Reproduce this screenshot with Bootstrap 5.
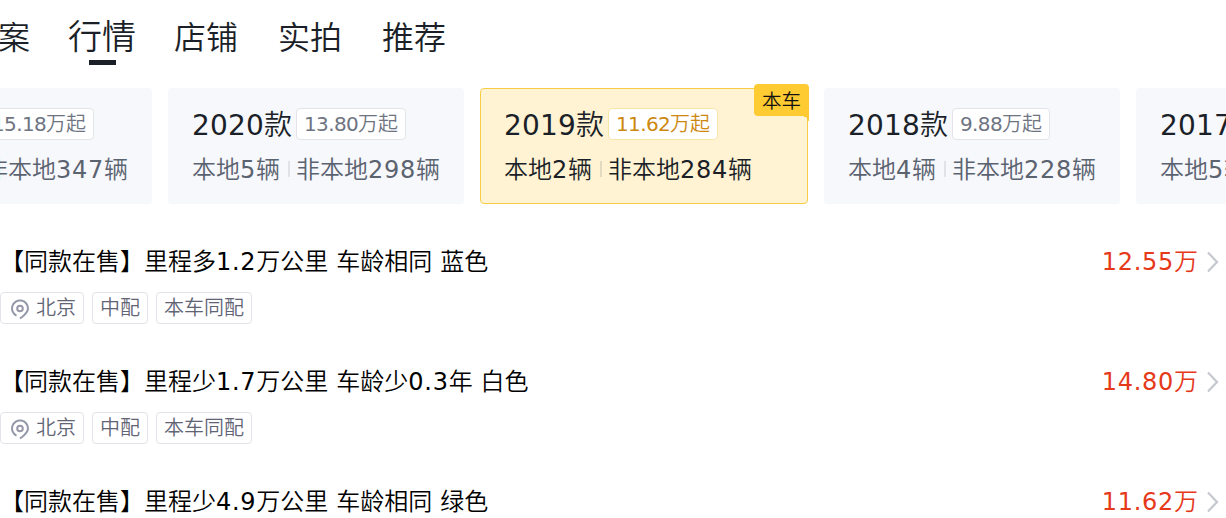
<!doctype html>
<html lang="zh-CN">

<head>
    <meta charset="UTF-8" />
    <meta name="viewport" content="width=device-width, initial-scale=1" />
    <title>行情</title>
    <link href="https://cdn.jsdelivr.net/npm/bootstrap@5.3.3/dist/css/bootstrap.min.css" rel="stylesheet">
    <style>
        body {
            height: 518px;
            font-family: "Noto Sans CJK SC", sans-serif;
            font-weight: 350;
            color: #1b1f28;
            white-space: nowrap;
        }

        /* digits */
        b {
            font-family: "DejaVu Sans", sans-serif;
            font-weight: 400;
            letter-spacing: .73px;
        }

        .tabs {
            height: 88px;
            padding-top: 12px;
            margin-left: -34px;
            gap: 40px;
            font-size: 32px;
            line-height: 46px;
        }

        .tabs .nav-item {
            width: 64px;
        }

        .tab-active {
            font-size: 34px;
            margin: 0 -2px;
        }

        .tab-line {
            width: 27px;
            height: 5px;
            margin: 2px auto 0;
            background: #1b1f28;
        }

        .years {
            margin-left: -144px;
            gap: 16px;
        }

        .year {
            width: 296px;
            height: 116px;
            padding: 16px 24px 0;
            border-radius: 4px;
            background: #f6f8fc;
        }

        .year-name {
            height: 40px;
            font-size: 28px;
            gap: 4px;
        }

        .year-name b {
            letter-spacing: .19px;
        }

        .price-tag,
        .info-tag {
            height: 32px;
            padding: 0 7px;
            border: 1px solid #e2e4ea;
            border-radius: 4px;
            background: #fff;
            color: #6e7482;
            font-size: 20px;
            line-height: 27px;
        }

        .year-name .price-tag b {
            letter-spacing: -.65px;
        }

        .year-count {
            height: 50px;
            font-size: 24px;
            color: #5c6370;
        }

        .year-count i {
            width: 2px;
            height: 16px;
            margin: 0 6px 0 8px;
            background: #dfe2e8;
        }

        .year-now {
            width: 328px;
            padding: 15px 23px 0;
            border: 1px solid #f5ce45;
            background: #fff3d3;
        }

        .year-now .year-count {
            color: #1b1f28;
        }

        .year-now .price-tag {
            color: #cc8810;
            border-color: #f9e5a8;
        }

        .year-now i {
            background: #e3dac2;
        }

        .now-flag {
            top: -5px;
            right: -2px;
            width: 55px;
            height: 32px;
            border-radius: 4px 4px 0 4px;
            background: #ffcb32;
            color: #111;
            font-size: 19.5px;
            line-height: 32px;
        }

        /* small fold that runs from the flag into the border */
        .now-flag::after {
            content: "";
            position: absolute;
            right: 0;
            top: 32px;
            width: 5px;
            height: 5px;
            background: radial-gradient(circle at 0 100%, transparent 4px, #ffcb32 4.5px);
        }

        .offer {
            height: 120px;
            padding: 3px 7px 0 0;
        }

        .offer-title {
            height: 44px;
            font-size: 24px;
            color: #000;
        }

        .offer-title div {
            word-spacing: 2.6px;
        }

        .offer-price {
            color: #e5391a;
            gap: 8px;
        }

        .offer-tags {
            margin-top: 9px;
        }

        .info-tag {
            color: #5f6575;
        }

        .info-tag svg {
            margin: 2px 4px 0 0;
        }
    </style>
</head>

<body class="overflow-hidden bg-white">
    <ul class="nav tabs flex-nowrap mb-0">
        <li class="nav-item">方案</li>
        <li class="nav-item">
            <div class="tab-active">行情</div>
            <div class="tab-line"></div>
        </li>
        <li class="nav-item">店铺</li>
        <li class="nav-item">实拍</li>
        <li class="nav-item">推荐</li>
    </ul>

    <div class="d-flex years">
        <div class="year flex-shrink-0">
            <div class="year-name d-flex align-items-center"><span><b>2021</b>款</span><span class="price-tag"><b>15.18</b>万起</span></div>
            <div class="year-count d-flex align-items-center"><span>本地<b>6</b>辆</span><i></i><span>非本地<b>347</b>辆</span></div>
        </div>
        <div class="year flex-shrink-0">
            <div class="year-name d-flex align-items-center"><span><b>2020</b>款</span><span class="price-tag"><b>13.80</b>万起</span></div>
            <div class="year-count d-flex align-items-center"><span>本地<b>5</b>辆</span><i></i><span>非本地<b>298</b>辆</span></div>
        </div>
        <div class="year year-now flex-shrink-0 position-relative">
            <span class="now-flag position-absolute text-center">本车</span>
            <div class="year-name d-flex align-items-center"><span><b>2019</b>款</span><span class="price-tag"><b>11.62</b>万起</span></div>
            <div class="year-count d-flex align-items-center"><span>本地<b>2</b>辆</span><i></i><span>非本地<b>284</b>辆</span></div>
        </div>
        <div class="year flex-shrink-0">
            <div class="year-name d-flex align-items-center"><span><b>2018</b>款</span><span class="price-tag"><b>9.88</b>万起</span></div>
            <div class="year-count d-flex align-items-center"><span>本地<b>4</b>辆</span><i></i><span>非本地<b>228</b>辆</span></div>
        </div>
        <div class="year flex-shrink-0">
            <div class="year-name d-flex align-items-center"><span><b>2017</b>款</span></div>
            <div class="year-count d-flex align-items-center"><span>本地<b>5</b>辆</span></div>
        </div>
    </div>

    <div class="pt-4" id="offers">
        <div class="offer mt-2">
            <div class="offer-title d-flex justify-content-between align-items-center">
                <div>【同款在售】里程多<b>1.2</b>万公里 车龄相同 蓝色</div>
                <span class="offer-price d-flex align-items-center"><span><b>12.55</b>万</span>
                    <svg width="13" height="24" fill="none" stroke="#c5c8cf" stroke-width="2.2"><path d="M2 3.5 11 13 2 22.5" /></svg></span>
            </div>
            <div class="d-flex gap-2 offer-tags">
                <span class="info-tag d-flex"><svg width="24" height="26" fill="none" stroke="#9498a8" stroke-width="2"><path d="M12 23.5C16 20.5 20 18 20 13.5A8 8 0 1 0 8.5 20.6" /><circle cx="12" cy="13.5" r="2.8" /></svg>北京</span>
                <span class="info-tag">中配</span>
                <span class="info-tag">本车同配</span>
            </div>
        </div>
        <div class="offer">
            <div class="offer-title d-flex justify-content-between align-items-center">
                <div>【同款在售】里程少<b>1.7</b>万公里 车龄少<b>0.3</b>年 白色</div>
                <span class="offer-price d-flex align-items-center"><span><b>14.80</b>万</span>
                    <svg width="13" height="24" fill="none" stroke="#c5c8cf" stroke-width="2.2"><path d="M2 3.5 11 13 2 22.5" /></svg></span>
            </div>
            <div class="d-flex gap-2 offer-tags">
                <span class="info-tag d-flex"><svg width="24" height="26" fill="none" stroke="#9498a8" stroke-width="2"><path d="M12 23.5C16 20.5 20 18 20 13.5A8 8 0 1 0 8.5 20.6" /><circle cx="12" cy="13.5" r="2.8" /></svg>北京</span>
                <span class="info-tag">中配</span>
                <span class="info-tag">本车同配</span>
            </div>
        </div>
        <div class="offer">
            <div class="offer-title d-flex justify-content-between align-items-center">
                <div>【同款在售】里程少<b>4.9</b>万公里 车龄相同 绿色</div>
                <span class="offer-price d-flex align-items-center"><span><b>11.62</b>万</span>
                    <svg width="13" height="24" fill="none" stroke="#c5c8cf" stroke-width="2.2"><path d="M2 3.5 11 13 2 22.5" /></svg></span>
            </div>
        </div>
    </div>
    <script src="https://cdn.jsdelivr.net/npm/bootstrap@5.3.3/dist/js/bootstrap.bundle.min.js"></script>
</body>

</html>
